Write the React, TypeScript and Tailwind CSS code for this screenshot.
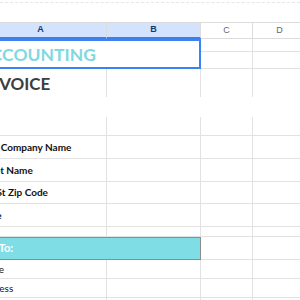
import React from 'react';

const COLS = ['A', 'B', 'C', 'D'];

// gridline cell
function Cell({ className = '', children }: { className?: string; children?: React.ReactNode }) {
  return <div className={`border-r border-b border-[#e2e2e2] flex items-center overflow-visible whitespace-nowrap ${className}`}>{children}</div>;
}

function LabelRow({ text, bold = true, pad = 'pl-[3px]' }: { text: string; bold?: boolean; pad?: string }) {
  return (
    <>
      <Cell className={`${pad} text-[10px] text-[#111] ${bold ? 'font-bold' : 'font-normal'}`}>{text}</Cell>
      <Cell />
      <Cell />
      <Cell />
    </>
  );
}

export default function App() {
  return (
    <div className="w-[300px] h-[300px] overflow-hidden bg-white font-['Lato','Liberation_Sans',sans-serif]">
      <div className="h-[22px] pt-[2px]">
        <div className="border-t border-dashed border-[#e3e6ea]" />
      </div>
      <div
        className="ml-[-25px] grid grid-cols-[132px_94px_52px_54px] grid-rows-[17px_13px_17px_28px_20px_19px_23px_23px_22px_23px_10px_23px_19px_19px_20px]"
      >
        {COLS.map((c) => {
          const sel = c === 'A' || c === 'B';
          return (
            <div
              key={c}
              className={`flex items-center justify-center border-t border-r border-[#dcdcdc] font-['Liberation_Sans',Arial,sans-serif] text-[9px] ${
                sel ? 'bg-[#d3e3fd] text-[#0b3a7a] font-bold border-b-2 border-b-[#3f7fe8]' : 'bg-white text-[#666] border-b border-b-[#dcdcdc]'
              }`}
            >
              {c}
            </div>
          );
        })}

        {/* A1:B2 merged, selected */}
        <div className="col-span-2 row-span-2 border-2 border-[#3b82f6] flex items-end pl-[2px] pb-[4px] text-[17.5px] font-bold leading-none text-[#80d8e2] whitespace-nowrap">
          ACCOUNTING
        </div>
        <Cell />
        <Cell />
        <Cell />
        <Cell />

        <div className="flex items-end border-r border-[#e2e2e2] pl-[6px] pb-[5px] text-[17px] font-bold leading-none text-[#3d3d3d] whitespace-nowrap">
          INVOICE
        </div>
        <div className="border-r border-[#e2e2e2]" />
        <div className="border-r border-[#e2e2e2]" />
        <div className="border-r border-[#e2e2e2]" />

        <div className="col-span-4" />

        <LabelRow text="" />
        <LabelRow text="Your Company Name" />
        <LabelRow text="Street Name" pad="pl-[2px]" />
        <LabelRow text="City, St Zip Code" pad="[text-indent:-1px]" />
        <LabelRow text="Phone" pad="[text-indent:-2px]" />
        <LabelRow text="" />

        <div className="col-span-2 bg-[#7fdde6] border border-[#8c8c8c] flex items-center pl-[5px] text-[11px] font-bold text-white whitespace-nowrap">
          Bill To:
        </div>
        <Cell />
        <Cell />

        <LabelRow text="Name" bold={false} />
        <LabelRow text="Address" bold={false} />
        <LabelRow text="" />
      </div>
    </div>
  );
}
